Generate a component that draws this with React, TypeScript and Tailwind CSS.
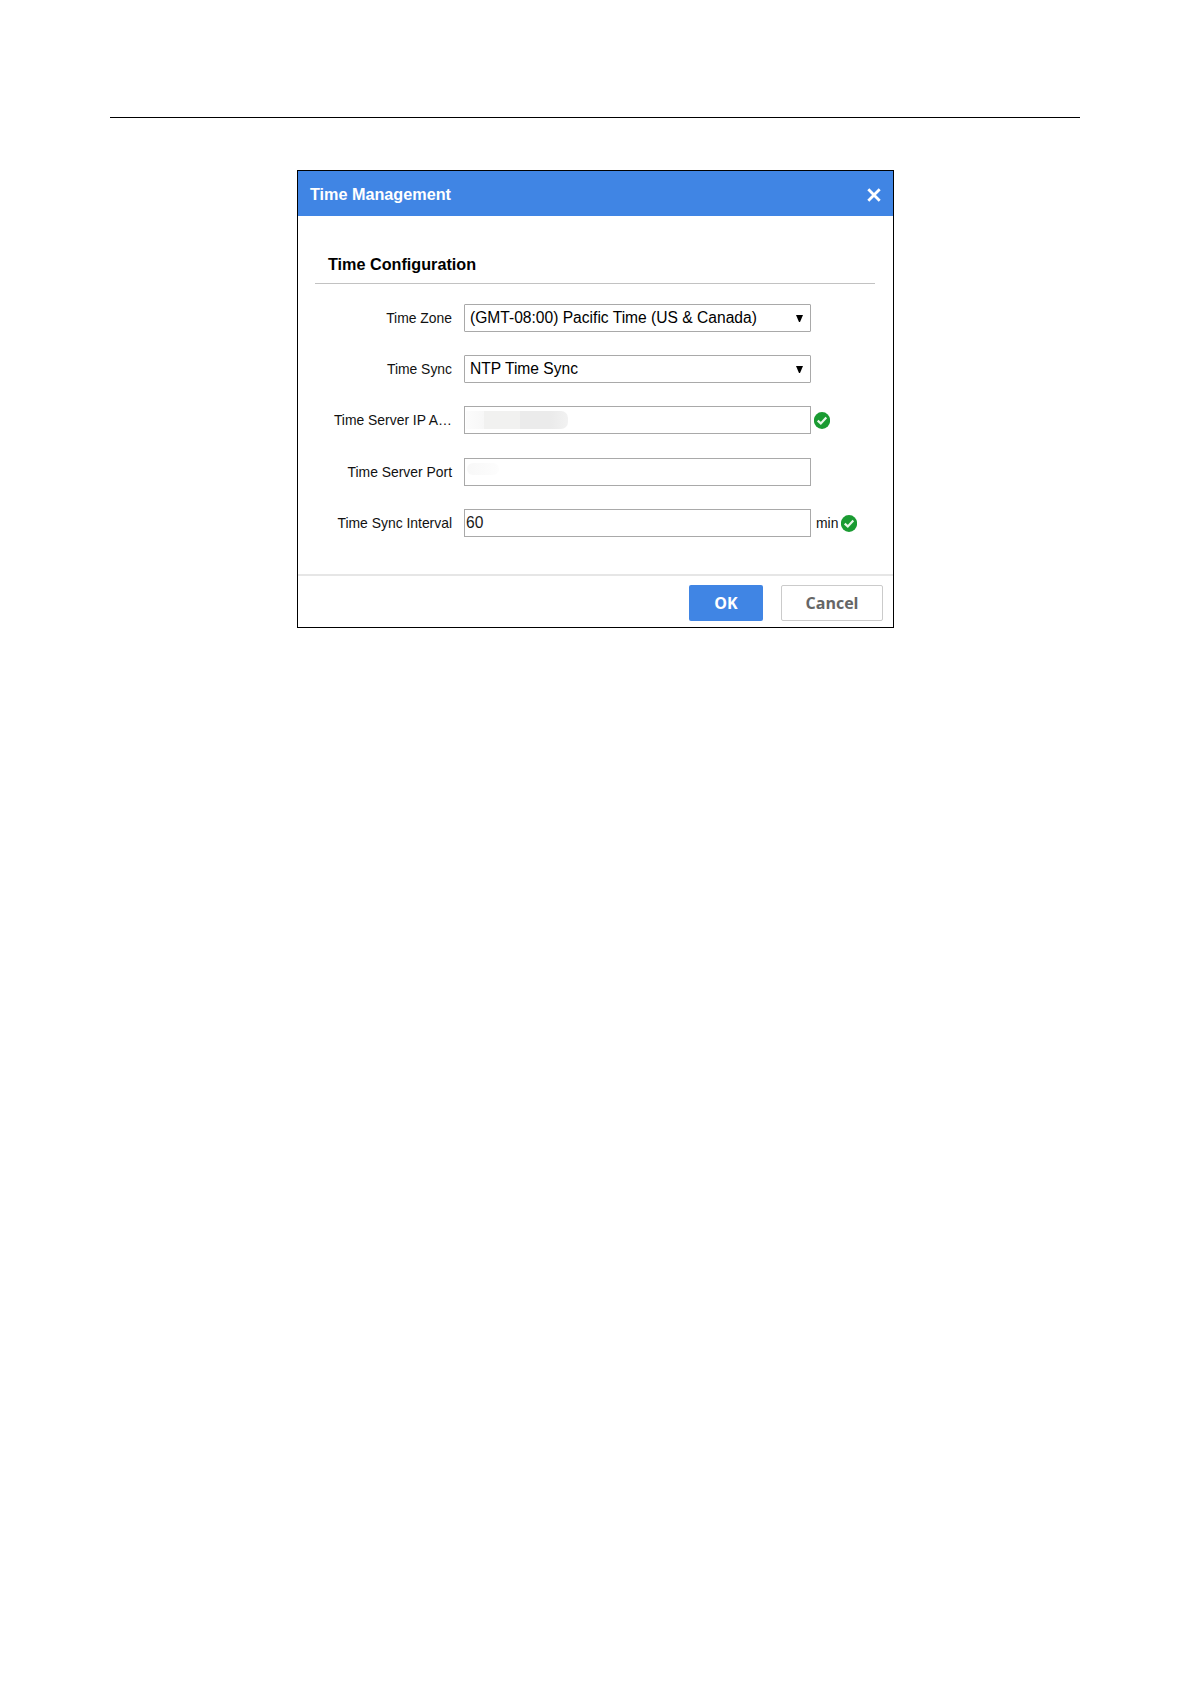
import type { ReactNode } from 'react';

function ValidIcon() {
  return (
    <svg className="w-4 h-[17px] shrink-0" viewBox="0 0 16 17">
      <ellipse cx="8" cy="8.5" rx="8.1" ry="8.4" fill="#1a9b32" />
      <path d="M3.7 8.6L6.8 11.4L12.3 5.6" fill="none" stroke="#e9f7ea" strokeWidth="2.2" />
    </svg>
  );
}

function Row({ label, children }: { label: string; children: ReactNode }) {
  return (
    <div className="flex items-center h-7">
      <label className="w-[137px] mr-3 text-right text-[13.9px] leading-7 text-[#111] whitespace-nowrap">
        {label}
      </label>
      {children}
    </div>
  );
}

function Select({ value }: { value: string }) {
  return (
    <button className="flex items-center justify-between w-[347px] h-7 pl-[5px] pr-[7px] border border-[#a9a9a9] rounded-[1px] bg-white text-[15.6px] leading-[26px] text-black whitespace-nowrap">
      <span>{value}</span>
      <svg className="w-[7px] h-[7px]" viewBox="0 0 7 7">
        <path d="M0 0H7L4 7H3Z" fill="#000" />
      </svg>
    </button>
  );
}

function Field({ children }: { children?: ReactNode }) {
  return (
    <div className="flex items-center w-[347px] h-7 pl-px border border-[#a9a9a9] bg-white text-[15.6px] leading-[26px] text-[#1a1a1a]">
      {children}
    </div>
  );
}

export default function App() {
  return (
    <div className="min-h-[1684px] bg-white pt-[117px] font-['Liberation_Sans',Arial,sans-serif]">
      <hr className="w-[970px] ml-[110px] border-t border-black" />

      <div className="flex flex-col w-[597px] h-[458px] mt-[52px] ml-[297px] border border-black bg-white">
        {/* Title bar */}
        <div className="flex items-center justify-between h-[45px] pl-3 pr-3 bg-[#4085e4] shrink-0">
          <h1 className="text-[16.2px] leading-5 font-bold text-white">Time Management</h1>
          <svg className="w-[14px] h-[14px] mt-[3px]" viewBox="0 0 14 14">
            <path d="M1.3 1.3L12.7 12.7M12.7 1.3L1.3 12.7" stroke="#fff" strokeWidth="2.8" />
          </svg>
        </div>

        <div className="h-[358px] pt-[38px] pl-[17px] pr-[18px] shrink-0">
          <h2 className="h-[29px] pl-[13px] text-[16.2px] leading-5 font-bold text-black">Time Configuration</h2>
          <div className="h-px bg-[#c2c2c2]" />

          <div className="flex flex-col gap-[23px] pt-5">
            <Row label="Time Zone">
              <Select value="(GMT-08:00) Pacific Time (US & Canada)" />
            </Row>
            <Row label="Time Sync">
              <Select value="NTP Time Sync" />
            </Row>
            <Row label="Time Server IP A…">
              <Field>
                {/* masked address */}
                <div className="flex h-[18px] -mt-px">
                  <div className="w-[18px] bg-linear-to-r from-[#fcfcfc] to-[#f7f7f7]" />
                  <div className="w-9 bg-[#f1f1f0]" />
                  <div className="w-[31px] bg-[#ebebeb]" />
                  <div className="w-[17px] bg-linear-to-r from-[#ebebeb] to-[#f2f2f2] rounded-r-[7px]" />
                </div>
              </Field>
              <span className="flex ml-[3px]"><ValidIcon /></span>
            </Row>
            <div className="mt-px">
              <Row label="Time Server Port">
                <Field>
                  <div className="w-8 h-3 ml-px -mt-1.5 bg-linear-to-r from-[#f8f8f8] to-[#fdfdfd] rounded-full" />
                </Field>
              </Row>
            </div>
            <Row label="Time Sync Interval">
              <Field>
                <span>60</span>
              </Field>
              <span className="ml-[5px] mr-[3px] text-[13.9px] leading-7 text-[#111]">min</span>
              <ValidIcon />
            </Row>
          </div>
        </div>

        {/* Footer */}
        <div className="flex justify-end gap-[18px] grow pt-[9px] pr-[10px] border-t-2 border-[#e6e6e6] font-['Open_Sans','Noto_Sans',sans-serif] text-base font-bold">
          <button className="w-[74px] h-9 rounded-xs bg-[#4085e4] text-white">OK</button>
          <button className="w-[102px] h-9 rounded-xs border border-[#cbcbcb] bg-white text-[#666]">Cancel</button>
        </div>
      </div>
    </div>
  );
}
